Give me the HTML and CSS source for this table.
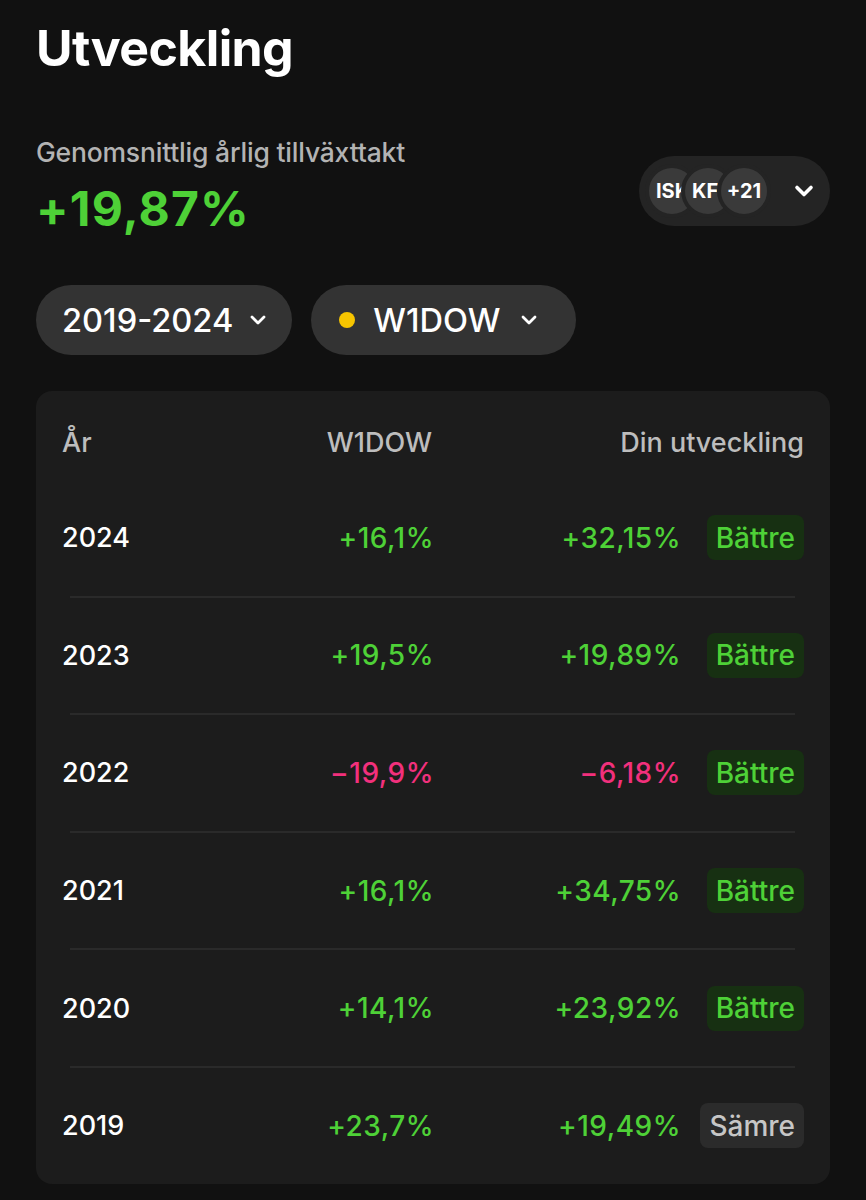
FILE: index.html
```html
<!DOCTYPE html>
<html lang="sv">
<head>
<meta charset="utf-8">
<link rel="stylesheet" href="styles.css">
</head>
<body>
<main class="page">
  <h1 class="title">Utveckling</h1>
  <section class="summary">
    <div class="summary-text">
      <div class="label">Genomsnittlig årlig tillväxttakt</div>
      <div class="value">+19,87%</div>
    </div>
    <button class="accounts">
      <span class="avatars">
        <span class="avatar"><span>ISK</span></span>
        <span class="avatar"><span>KF</span></span>
        <span class="avatar center">+21</span>
      </span>
      <svg class="chev-big" width="20" height="14" viewBox="0 0 20 14"><path d="M3 3.5 L10 10.5 L17 3.5" fill="none" stroke="#fff" stroke-width="3.6" stroke-linecap="round" stroke-linejoin="round"/></svg>
    </button>
  </section>
  <div class="filters">
    <button class="pill">2019-2024<svg class="chev" width="18" height="12" viewBox="0 0 18 12"><path d="M3 3 L9 9 L15 3" fill="none" stroke="#fff" stroke-width="2.8" stroke-linecap="round" stroke-linejoin="round"/></svg></button>
    <button class="pill wide"><span class="dot"></span>W1DOW<svg class="chev" width="18" height="12" viewBox="0 0 18 12"><path d="M3 3 L9 9 L15 3" fill="none" stroke="#fff" stroke-width="2.8" stroke-linecap="round" stroke-linejoin="round"/></svg></button>
  </div>
  <section class="card">
    <div class="row head">
      <div class="c-year">År</div>
      <div class="c-idx">W1DOW</div>
      <div class="c-you">Din utveckling</div>
    </div>
    <div class="row">
      <div class="c-year">2024</div>
      <div class="c-idx pos">+16,1%</div>
      <div class="c-you pos">+32,15%</div>
      <div class="badge better">Bättre</div>
    </div>
    <div class="sep"></div>
    <div class="row">
      <div class="c-year">2023</div>
      <div class="c-idx pos">+19,5%</div>
      <div class="c-you pos">+19,89%</div>
      <div class="badge better">Bättre</div>
    </div>
    <div class="sep"></div>
    <div class="row">
      <div class="c-year">2022</div>
      <div class="c-idx neg">−19,9%</div>
      <div class="c-you neg">−6,18%</div>
      <div class="badge better">Bättre</div>
    </div>
    <div class="sep"></div>
    <div class="row">
      <div class="c-year">2021</div>
      <div class="c-idx pos">+16,1%</div>
      <div class="c-you pos">+34,75%</div>
      <div class="badge better">Bättre</div>
    </div>
    <div class="sep"></div>
    <div class="row">
      <div class="c-year">2020</div>
      <div class="c-idx pos">+14,1%</div>
      <div class="c-you pos">+23,92%</div>
      <div class="badge better">Bättre</div>
    </div>
    <div class="sep"></div>
    <div class="row">
      <div class="c-year">2019</div>
      <div class="c-idx pos">+23,7%</div>
      <div class="c-you pos">+19,49%</div>
      <div class="badge worse">Sämre</div>
    </div>
  </section>
</main>
</body>
</html>
```

FILE: styles.css
```css
* { box-sizing: border-box; }
html, body { margin: 0; padding: 0; }
body {
  background: #111111;
  color: #fff;
  font-family: Inter, "Noto Sans", "Liberation Sans", sans-serif;
}
.page {
  width: 866px;
  padding: 20px 36px 0 36px;
}
.title {
  margin: 0;
  font-size: 50px;
  font-weight: 700;
  line-height: 56px;
  letter-spacing: -0.6px;
}
.summary {
  margin-top: 60px;
  display: flex;
  align-items: flex-start;
  justify-content: space-between;
}
.summary-text { display: flex; flex-direction: column; }
.label {
  color: #b3b3b3;
  font-size: 26.5px;
  font-weight: 500;
  line-height: 32px;
  letter-spacing: -0.2px;
}
.value {
  color: #4ed137;
  font-size: 48px;
  font-weight: 700;
  line-height: 56px;
  margin-top: 13px;
  letter-spacing: 1.2px;
}
button {
  font-family: inherit;
  border: none;
  color: #fff;
  cursor: pointer;
}
.accounts {
  height: 70px;
  width: 191px;
  border-radius: 35px;
  background: #242424;
  display: flex;
  align-items: center;
  padding: 0 16px 0 6px;
  justify-content: space-between;
  margin-top: 20px;
}
.avatars { display: flex; align-items: center; }
.avatar {
  width: 54px;
  height: 54px;
  border-radius: 50%;
  background: #3a3a3a;
  border: 4px solid #242424;
  font-size: 20px;
  font-weight: 700;
  overflow: hidden;
  white-space: nowrap;
  display: flex;
  align-items: center;
  padding-left: 7px;
}
.avatar + .avatar { margin-left: -18px; }
.avatar.center { justify-content: center; padding-left: 0; }
.chev-big { display: block; }
.filters {
  display: flex;
  gap: 19px;
  margin-top: 48px;
}
.pill {
  height: 70px;
  border-radius: 35px;
  background: #333333;
  display: flex;
  align-items: center;
  padding: 0 25px 0 26px;
  font-size: 32.6px;
  font-weight: 500;
  letter-spacing: 0;
}
.pill.wide { padding: 0 38px 0 28px; }
.pill .chev { margin-left: 16px; }
.pill.wide .chev { margin-left: 20px; }
.dot {
  width: 16px;
  height: 16px;
  border-radius: 50%;
  background: #f7c500;
  margin-right: 18px;
}
.card {
  margin-top: 36px;
  width: 794px;
  background: #1c1c1c;
  border-radius: 16px;
  overflow: hidden;
}
.row {
  display: grid;
  grid-template-columns: 1fr 220px 247px 125px;
  align-items: center;
  height: 115.6px;
  padding: 0 26px 0 26px;
  font-size: 27px;
  font-weight: 500;
}
.row.head {
  grid-template-columns: 1fr 220px 372px;
  height: 89px;
  align-items: start;
  padding-top: 32px;
  color: #bdbdbd;
  letter-spacing: 0;
}
.head > div { line-height: 40px; }
.c-idx, .c-you { text-align: right; }
.pos, .neg { font-size: 28px; letter-spacing: 0.5px; margin-right: -2px; }
.badge {
  justify-self: end;
  height: 45px;
  padding: 0 9px;
  border-radius: 8px;
  display: flex;
  align-items: center;
  font-size: 28px;
  font-weight: 500;
}
.badge.better { background: #173012; color: #4ed137; letter-spacing: 0; }
.badge.worse { background: #2b2b2b; color: #c6c6c6; letter-spacing: 0; }
.pos { color: #4ed137; }
.neg { color: #f2307c; }
.sep {
  height: 2px;
  background: #2a2a2a;
  margin: 0 35px 0 34px;
}
```
